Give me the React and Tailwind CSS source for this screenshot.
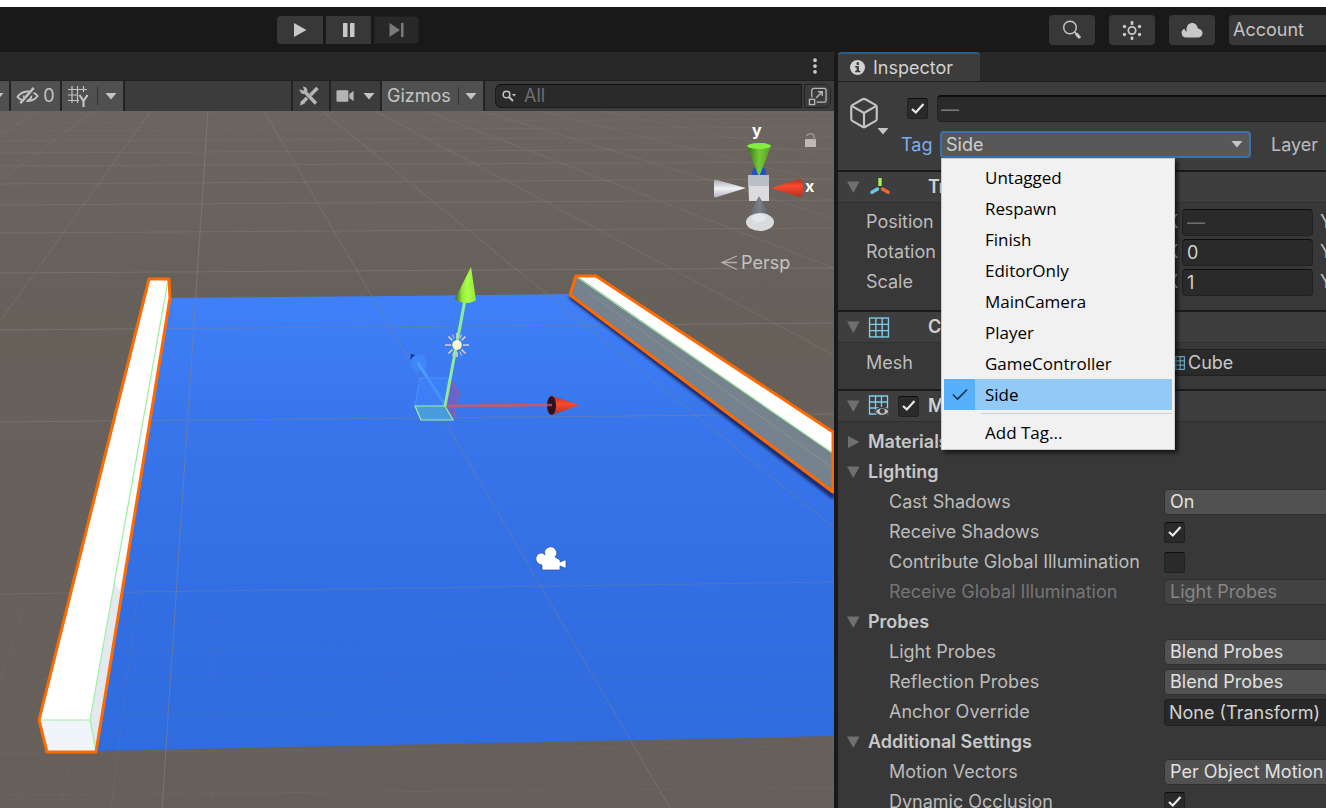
import { useState } from 'react'
import { MoreVertical, Box, Check } from 'lucide-react'

const TAGS = ['Untagged', 'Respawn', 'Finish', 'EditorOnly', 'MainCamera', 'Player', 'GameController', 'Side']

// ── Small shared pieces ──

function Caret({ className = '' }) {
    return (
        <svg viewBox="0 0 12 8" className={`w-3 h-2 shrink-0 fill-[#c4c4c4] ${className}`} aria-hidden="true">
            <path d="M0.5 1h11L6 7.5z" />
        </svg>
    )
}

function Fold({ open = true }) {
    return (
        <svg viewBox="0 0 14 14" className="w-[14px] h-[14px] shrink-0 fill-[#6f6f6f]" aria-hidden="true">
            {open ? <path d="M1 1.500h12.500L7.300 13z" /> : <path d="M2 1v12L13.500 7z" />}
        </svg>
    )
}

function CheckBox({ id, label, defaultChecked = false }) {
    return (
        <span className="grid w-[21px] h-[21px] shrink-0 place-items-center">
            <input
                id={id}
                type="checkbox"
                aria-label={label}
                defaultChecked={defaultChecked}
                className="peer col-start-1 row-start-1 w-full h-full appearance-none rounded-[3px] border border-[#212121] border-t-[#0d0d0d] bg-[#2a2a2a]"
            />
            <svg
                viewBox="0 0 14 12"
                className="pointer-events-none invisible peer-checked:visible col-start-1 row-start-1 w-[14px] h-3"
                fill="none"
                stroke="#e8e8e8"
                strokeWidth="2.200"
            >
                <path d="M1 6l3.800 3.500L12.500 1" />
            </svg>
        </span>
    )
}

function GridIcon({ className = '' }) {
    return (
        <svg viewBox="0 0 20 20" className={className} fill="none" stroke="#7fcdf0" strokeWidth="1.300" aria-hidden="true">
            <rect x="1" y="1" width="18" height="18" />
            <path d="M7 1v18M13 1v18M1 7h18M1 13h18" />
        </svg>
    )
}

// ── Top toolbar ──

function TopBar() {
    const side = 'flex items-center justify-center h-[30px] rounded bg-[#383838]'
    return (
        <header className="shrink-0 border-t-[7px] border-white bg-[#191919]">
            <div className="flex items-center h-[45px] pl-[277px]">
                <div className="flex gap-[3px]">
                    <button aria-label="Play" className="flex items-center justify-center w-[46px] h-7 rounded-l bg-[#383838]">
                        <svg viewBox="0 0 14 16" className="w-[14px] h-4 fill-[#c8c8c8]"><path d="M1 1l12.500 7L1 15z" /></svg>
                    </button>
                    <button aria-label="Pause" className="flex items-center justify-center w-[45px] h-7 bg-[#383838]">
                        <svg viewBox="0 0 14 16" className="w-[14px] h-4 fill-[#c8c8c8]">
                            <rect x="1" y="1" width="4.500" height="14" rx="0.500" />
                            <rect x="8" y="1" width="4.500" height="14" rx="0.500" />
                        </svg>
                    </button>
                    <button aria-label="Step" className="flex items-center justify-center w-[45px] h-7 rounded-r border border-[#202020] bg-[#282828]">
                        <svg viewBox="0 0 16 16" className="w-4 h-4 fill-[#7a7a7a]">
                            <path d="M0.500 1l10.500 7L0.500 15z" />
                            <rect x="12" y="1" width="2.500" height="14" />
                        </svg>
                    </button>
                </div>
                <div className="ml-auto flex gap-[14px]">
                    <button aria-label="Search" className={`${side} w-[46px]`}>
                        <svg viewBox="0 0 20 20" className="w-5 h-5" fill="none" stroke="#c8c8c8">
                            <circle cx="8" cy="7.500" r="6.300" strokeWidth="1.400" />
                            <path d="M12.500 12l2 2" strokeWidth="1.500" />
                            <path d="M14 13.500l4 4.500" strokeWidth="3" />
                        </svg>
                    </button>
                    <button aria-label="Services" className={`${side} w-[46px]`}>
                        <svg viewBox="0 0 20 20" className="w-5 h-5 fill-[#c8c8c8]">
                            <circle cx="10" cy="10.500" r="3.700" fill="none" stroke="#c8c8c8" strokeWidth="1.800" />
                            <rect x="8.600" y="1" width="2.800" height="4" rx="1" />
                            <rect x="8.600" y="16.500" width="2.800" height="3.500" rx="1" />
                            <circle cx="2.500" cy="6.500" r="1.700" />
                            <circle cx="17.500" cy="6.500" r="1.700" />
                            <circle cx="2.500" cy="14.500" r="1.700" />
                            <circle cx="17.500" cy="14.500" r="1.700" />
                        </svg>
                    </button>
                    <button aria-label="Cloud" className={`${side} w-[46px]`}>
                        <svg viewBox="0 0 22 16" className="w-[22px] h-4 fill-[#c8c8c8]">
                            <path d="M5 15.500a4.500 4.500 0 0 1-1.500-8.700c.3 1.400 1 2.300 2.200 2.900C4.800 5 7 1 11 1c3.500 0 5.500 2.500 5.800 5.500 2.700.2 4.700 2 4.700 4.500s-2 4.500-4.500 4.500z" />
                        </svg>
                    </button>
                    <button className="h-[30px] w-[97px] rounded-l bg-[#383838] pl-1 text-left text-[#c4c4c4]">Account</button>
                </div>
            </div>
        </header>
    )
}

// ── Scene panel ──

function SceneToolbar() {
    return (
        <div className="flex h-[31px] shrink-0 items-stretch gap-[2px] border-t border-[#202020] bg-[#242424]">
            <button aria-label="Audio options" className="flex w-[9px] items-center justify-start overflow-hidden bg-[#505050]">
                <Caret className="-ml-2" />
            </button>
            <button aria-label="Hidden objects" className="flex w-[49px] items-center justify-center gap-1 bg-[#505050] text-[#c4c4c4]">
                <svg viewBox="0 0 24 20" className="w-[23px] h-5" fill="none" stroke="#c4c4c4" strokeWidth="2">
                    <path d="M1.500 11C6 4 17 3 22.500 10 18 16.500 7 17 1.500 11z" />
                    <path d="M8 9.500c0 4 2 5 4 5s4-1.500 4-5" />
                    <path d="M4 19.500L20 1.500" stroke="#505050" strokeWidth="4.500" />
                    <path d="M4.500 17.500L18.500 1.500" strokeWidth="2.500" />
                </svg>
                0
            </button>
            <button aria-label="Grid snapping" className="flex w-[61px] items-center bg-[#505050] pl-[5px]">
                <svg viewBox="0 0 22 22" className="w-[22px] h-[22px]" fill="none" stroke="#c4c4c4" strokeWidth="1.200">
                    <path d="M5 1v17M10.500 1v17M16.500 1v6M1 4.500h19M1 10h10M1 15.500h11" />
                    <path d="M12.500 10l4 6 4-6M16.500 16v6" strokeWidth="2.200" />
                </svg>
                <span className="ml-2 h-[18px] w-px bg-[#333]" />
                <Caret className="ml-[7px]" />
            </button>
            <div className="w-[166px] shrink bg-[#3c3c3c]" />
            <button aria-label="Tools" className="flex w-9 items-center justify-center bg-[#3c3c3c] pr-1">
                <svg viewBox="0 0 20 20" className="w-5 h-5" fill="none" stroke="#b4b4b4" strokeWidth="3">
                    <path d="M6.500 6.500L17 17.500" strokeWidth="3.500" />
                    <path d="M1.500 4.500c1 3 4 3.500 5.500 1.800S7.500 2 5 1.500l1 2.500-2 1.500z" strokeWidth="1.500" fill="#b4b4b4" />
                    <path d="M18.500 2L11.500 9M8 12l-5 5" strokeWidth="3.500" />
                    <path d="M1 19.500l1-5L6 17.500z" fill="#b4b4b4" stroke="none" />
                </svg>
            </button>
            <button aria-label="Scene camera" className="flex w-[49px] items-center justify-center gap-2 bg-[#3c3c3c]">
                <svg viewBox="0 0 20 14" className="w-[19px] h-[14px] fill-[#b4b4b4]">
                    <rect x="0.500" y="1" width="12.500" height="12" rx="1" />
                    <path d="M14 5l4.500-3.500v11L14 9z" />
                </svg>
                <Caret />
            </button>
            <button className="flex w-[101px] items-center bg-[#505050] pl-[5px] text-[#c4c4c4]">
                Gizmos
                <span className="ml-auto h-[18px] w-px bg-[#333]" />
                <Caret className="mx-[6px]" />
            </button>
            <div className="flex min-w-0 flex-1 items-center gap-[2px] bg-[#3c3c3c] pl-[10px] pr-[3px]">
                <label className="flex h-6 min-w-0 flex-1 items-center rounded-l-md border border-[#1c1c1c] border-t-[#0d0d0d] bg-[#2a2a2a] pl-[6px]">
                    <svg viewBox="0 0 14 12" className="w-[14px] h-3" fill="none" stroke="#c4c4c4" strokeWidth="1.500">
                        <circle cx="4.500" cy="4.500" r="3.300" />
                        <path d="M7 7l4 4" strokeWidth="2" />
                        <path d="M10 4h4l-2 2.500z" fill="#c4c4c4" stroke="none" />
                    </svg>
                    <input aria-label="Search scene" placeholder="All" className="ml-2 min-w-0 flex-1 bg-transparent placeholder:text-[#6e6e6e] outline-none" />
                </label>
                <button aria-label="Open search window" className="flex h-6 w-[27px] items-center justify-center rounded-r-md border border-[#232323]">
                    <svg viewBox="0 0 20 20" className="w-[19px] h-[19px]" fill="none" stroke="#b8b8b8" strokeWidth="1.400">
                        <path d="M4 11V3.500A2 2 0 0 1 6 1.500h11a2 2 0 0 1 2 2V14a2 2 0 0 1-2 2H9" />
                        <rect x="1.500" y="13" width="5.500" height="5.500" />
                        <path d="M8.500 11.500l6-6M10.500 5h4.500v4.500" />
                    </svg>
                </button>
            </div>
        </div>
    )
}

const ROWS = [
    [115, 113, 0.12], [123, 119, 0.15], [131, 127, 0.2], [141, 137, 0.25], [153, 149, 0.3], [166, 162, 0.32],
    [184, 179, 0.36], [205, 200, 0.4], [233, 228, 0.42], [273, 268, 0.5], [330, 323, 0.5], [422, 414, 0.5], [594, 582, 0.35],
    [620, 616, 0.1], [650, 646, 0.1], [680, 675, 0.12], [715, 708, 0.12], [753, 746, 0.14], [795, 788, 0.16],
]

const COLUMNS = [
    [208, 111, 162, 808, 0.6], [264, 111, 670, 808, 0.45], [322, 111, 834, 528, 0.45], [375, 111, 834, 355, 0.4],
    [426, 111, 834, 268, 0.35], [482, 111, 834, 218, 0.3], [540, 111, 834, 184, 0.25], [600, 111, 834, 158, 0.2],
    [151, 111, 0, 321, 0.4], [94, 111, 0, 180, 0.3], [40, 111, 0, 135, 0.25],
    [26, 600, 0, 680, 0.15], [47, 750, 10, 808, 0.15], [73, 750, 60, 808, 0.15], [137, 600, 111, 808, 0.2], [213, 600, 213, 808, 0.12],
]

function SceneView() {
    return (
        <svg viewBox="0 111 834 697" preserveAspectRatio="xMidYMid slice" className="min-h-0 w-full flex-1" role="img" aria-label="Scene">
            <defs>
                <linearGradient id="sky" x1="0" y1="0" x2="0" y2="1">
                    <stop offset="0" stopColor="#6c655f" />
                    <stop offset="0.160" stopColor="#69625d" />
                    <stop offset="0.240" stopColor="#66615a" />
                    <stop offset="0.450" stopColor="#68605a" />
                    <stop offset="1" stopColor="#67605a" />
                </linearGradient>
                <linearGradient id="floor" x1="0" y1="0" x2="0" y2="1">
                    <stop offset="0" stopColor="#3f80f8" />
                    <stop offset="0.300" stopColor="#3875eb" />
                    <stop offset="0.700" stopColor="#316ee3" />
                    <stop offset="1" stopColor="#2f6cdf" />
                </linearGradient>
                <linearGradient id="green" x1="0" x2="1">
                    <stop offset="0" stopColor="#356e14" />
                    <stop offset="0.500" stopColor="#74ca35" />
                    <stop offset="1" stopColor="#5a9e29" />
                </linearGradient>
                <linearGradient id="lime" x1="0" x2="1">
                    <stop offset="0" stopColor="#3f6414" />
                    <stop offset="0.350" stopColor="#98e840" />
                    <stop offset="0.600" stopColor="#aaff48" />
                    <stop offset="1" stopColor="#94e43c" />
                </linearGradient>
                <linearGradient id="red" x1="0" y1="0" x2="0" y2="1">
                    <stop offset="0" stopColor="#b3301d" />
                    <stop offset="0.400" stopColor="#fb4a2e" />
                    <stop offset="1" stopColor="#b3301d" />
                </linearGradient>
                <linearGradient id="white" x1="0" y1="0" x2="0" y2="1">
                    <stop offset="0" stopColor="#a9abb2" />
                    <stop offset="0.500" stopColor="#f1f2f6" />
                    <stop offset="1" stopColor="#b4b6bc" />
                </linearGradient>
                <linearGradient id="gray" x1="0" x2="1">
                    <stop offset="0" stopColor="#5a5d64" />
                    <stop offset="0.500" stopColor="#7c8088" />
                    <stop offset="1" stopColor="#4d5056" />
                </linearGradient>
                <filter id="soft" x="-10%" y="-10%" width="120%" height="120%">
                    <feGaussianBlur stdDeviation="1.500" />
                </filter>
            </defs>

            <rect x="0" y="111" width="834" height="697" fill="url(#sky)" />
            <path d="M160 298l240-2 172-2 262 201v241L96 751z" fill="url(#floor)" />
            <g stroke="#84847f" strokeWidth="1">
                {ROWS.map(([a, b, o]) => <line key={a} x1="0" y1={a} x2="834" y2={b} strokeOpacity={o} />)}
                {COLUMNS.map(([a, b, c, d, o]) => <line key={`${a}-${b}`} x1={a} y1={b} x2={c} y2={d} strokeOpacity={o} />)}
            </g>

            {/* right wall */}
            <path d="M570 296L834 497" stroke="#14286a" strokeWidth="5" filter="url(#soft)" />
            <path d="M577 276h19L834 433v59L571 295z" fill="#77828f" />
            <path d="M577 276h19L834 433v21z" fill="#fff" />
            <path d="M577 277L834 454" stroke="#9fe9a0" strokeWidth="1.200" />
            <path d="M589 293L834 469" stroke="#84a08c" strokeWidth="0.600" />
            <path d="M576 276h20L833 432v60L570 295z" fill="none" stroke="#ff6a00" strokeWidth="3" strokeLinejoin="round" />

            {/* left wall */}
            <path d="M150 279h19l1 19L96 751H47l-7-31z" fill="#fff" />
            <path d="M168 280l2 18L96 751l-6-31z" fill="#e4e8f0" />
            <path d="M168 280l2 18L120 590l-9-10z" fill="#fbfcfe" />
            <path d="M40 720h50l6 31H47z" fill="#f0f5fb" />
            <path d="M168 280L90 720H40M90 720l6 31" fill="none" stroke="#9fef9f" strokeWidth="1.200" />
            <path d="M149 279h20l1 19L96 752H47l-8-32z" fill="none" stroke="#ff6a00" strokeWidth="3" strokeLinejoin="round" />

            {/* move handle */}
            <path d="M420 378h30l-5 28h-30z" fill="#3f86ff" fillOpacity="0.500" stroke="#4a92ff" />
            <path d="M450 379l9 13-6 28-8-14z" fill="#8657b8" fillOpacity="0.600" stroke="#b05890" />
            <path d="M415 406h30l8 14h-32z" fill="#4aa3d8" fillOpacity="0.850" stroke="#a0f0a0" strokeWidth="1.200" />
            <path d="M445 405L418 363" stroke="#4892ff" strokeWidth="3" />
            <path d="M410 364l1-10 8 2 3 4z" fill="#12308c" />
            <circle cx="418.500" cy="363" r="8.500" fill="#3f85fb" />
            <path d="M418 363l9 14" stroke="#4f9bff" strokeWidth="3" />
            <path d="M446 406l105-1" stroke="#bf5c70" strokeWidth="2.600" />
            <path d="M552 396l27 9-27 10z" fill="url(#red)" />
            <ellipse cx="551.500" cy="405.500" rx="4.500" ry="9.500" fill="#2c1220" />
            <path d="M547 405h5" stroke="#a04858" strokeWidth="2.500" />
            <path d="M445 406l20-106" stroke="#8fea9c" strokeWidth="3" />
            <path d="M471 267l5 33c-4 4-16 4-21-1z" fill="url(#lime)" />

            {/* light */}
            <g stroke="#d8d3c4" strokeWidth="1.600">
                <path d="M457 333v5M457 352v5M445 345h6M463 345h6M448.500 336.500l4 4M461.500 349.500l4 4M465.500 336.500l-4 4M452.500 349.500l-4 4" />
                <path d="M452.500 334.500l1.500 4M461.500 334.500l-1.500 4M452.500 355.500l1.500-4M461.500 355.500l-1.500-4" strokeWidth="1" />
            </g>
            <circle cx="457" cy="345" r="4.800" fill="#fcf7d2" />

            {/* camera */}
            <g fill="#fff" stroke="#2c4f9c" strokeWidth="0.700">
                <path d="M542 570v-5c-8-1-8-11-1-12 2 0 3 1 4 2a6 6 0 1 1 10 2l5 3v2l5-2h1v8h-1l-5-2v4z" />
            </g>

            {/* orientation gizmo */}
            <circle cx="759" cy="173" r="7" fill="#2050d0" />
            <path d="M747 146c4-4 20-4 24 0l-12 31z" fill="url(#green)" />
            <ellipse cx="759" cy="146" rx="12" ry="3" fill="#84ee3f" />
            <path d="M714 181c0-2 2-1 3-1l29 8-29 9c-1 0-3 1-3-1z" fill="url(#white)" />
            <path d="M748 175h21v26h-20z" fill="#dcdcde" />
            <path d="M748 175h21v11h-21z" fill="#babfc6" />
            <path d="M771 188l29-9c4 1 4 17 0 18z" fill="url(#red)" />
            <path d="M759 196l14 25h-27z" fill="url(#gray)" />
            <ellipse cx="760" cy="222" rx="14" ry="9" fill="#dadbde" />
            <ellipse cx="759" cy="218" rx="7" ry="4" fill="#e6e7ea" />
            <g fill="#fff" fontFamily="Inter, sans-serif" fontSize="16" fontWeight="700">
                <text x="752" y="136">y</text>
                <text x="805" y="192">x</text>
            </g>
            <rect x="805" y="139" width="11" height="8" rx="0.500" fill="#bdbab8" />
            <path d="M807 136c0-3 7-3 7 0v4" fill="none" stroke="#9a9693" strokeWidth="1.500" />
            <path d="M737 256l-15 6.500 15 7M737 262.500h-15" fill="none" stroke="#b5b1ae" strokeWidth="1.300" />
            <text x="741" y="269" fill="#c6c3c1" fontFamily="Inter, sans-serif" fontSize="18">Persp</text>
        </svg>
    )
}

function ScenePanel() {
    return (
        <section className="flex min-w-0 flex-1 flex-col bg-[#282828]">
            <div className="flex h-7 shrink-0 items-center justify-end pr-[9px]">
                <button aria-label="Panel menu"><MoreVertical className="h-5 w-5 text-[#d0d0d0]" strokeWidth={2.5} /></button>
            </div>
            <SceneToolbar />
            <SceneView />
        </section>
    )
}

// ── Inspector ──

function ComponentHeader({ icon, title, checkbox = false }) {
    return (
        <div className="flex h-[33px] shrink-0 items-center border-t-2 border-b border-t-[#1a1a1a] border-b-[#303030] bg-[#3e3e3e] pl-2">
            <Fold />
            <span className="ml-2 w-[22px]">{icon}</span>
            <span className="ml-2 mr-[9px] w-[21px]">
                {checkbox && <CheckBox label={`${title} enabled`} defaultChecked />}
            </span>
            <h2 className="font-semibold text-[#d2d2d2]">{title}</h2>
        </div>
    )
}

function Group({ title, open = true }) {
    return (
        <button className="flex h-[30px] w-full items-center gap-2 pl-2 font-semibold text-[#c8c8c8]">
            <Fold open={open} />
            {title}
        </button>
    )
}

function Row({ id, label, disabled = false, children }) {
    return (
        <div className="flex h-[30px] items-center">
            <label htmlFor={id} className={`w-[326px] shrink-0 pl-[51px] ${disabled ? 'text-[#757575]' : 'text-[#bcbcbc]'}`}>{label}</label>
            {children}
        </div>
    )
}

function SelectRow({ id, label, value, disabled }) {
    return (
        <Row id={id} label={label} disabled={disabled}>
            <select
                id={id}
                disabled={disabled}
                defaultValue={value}
                className="h-[26px] min-w-0 flex-1 appearance-none rounded-l border border-r-0 border-[#303030] bg-[#515151] pl-[5px] text-[#e0e0e0] disabled:bg-[#434343] disabled:text-[#858585] disabled:opacity-100"
            >
                <option>{value}</option>
            </select>
        </Row>
    )
}

function VectorRow({ label, value }) {
    return (
        <div className="flex h-[30px] items-center whitespace-nowrap text-[#bcbcbc]">
            <span className="w-[300px] shrink-0">{label}</span>
            <label className="flex items-center">
                <span className="w-4">X</span>
                <input
                    defaultValue={value}
                    className={`h-[27px] w-[131px] rounded border border-[#212121] border-t-[#0d0d0d] bg-[#2a2a2a] pl-1 ${value === '—' ? 'text-[#6e6e6e]' : 'text-[#d2d2d2]'}`}
                />
            </label>
            <span className="ml-[7px]">Y</span>
        </div>
    )
}

function TagMenu({ value, onPick }) {
    return (
        <div
            role="listbox"
            aria-label="Tags"
            className="absolute left-px top-full z-10 w-[234px] border border-[#cccccc] bg-[#f1f1f1] px-[2px] pt-[3px] font-['Open_Sans',sans-serif] text-[17px] text-black shadow-[3px_3px_4px_rgba(0,0,0,0.6)]"
        >
            {TAGS.map(tag => (
                <button
                    key={tag}
                    role="option"
                    aria-selected={tag === value}
                    onClick={() => onPick(tag)}
                    className={`flex h-[31px] w-full items-center ${tag === value ? 'bg-[#91c9f7]' : 'hover:bg-[#e0e0e0]'}`}
                >
                    <span className={`mr-[10px] flex h-full w-[31px] items-center justify-center ${tag === value ? 'bg-[#56b0fa]' : ''}`}>
                        {tag === value && <Check className="h-5 w-5 text-[#1b3550]" strokeWidth={2} />}
                    </span>
                    {tag}
                </button>
            ))}
            <hr className="my-[3px] ml-[37px] border-[#d0d0d0]" />
            <button className="flex h-8 w-full items-center pl-[41px]">Add Tag...</button>
        </div>
    )
}

function ObjectHeader() {
    const [tag, setTag] = useState('Side')
    return (
        <div className="flex h-[88px] shrink-0 pt-[13px] bg-[#3c3c3c]">
            <button aria-label="Object icon" className="flex w-[60px] shrink-0 items-start pl-[9px]">
                <Box className="h-9 w-[34px] shrink-0 text-[#c4c4c4]" strokeWidth={1.5} />
                <Caret className="-ml-1 mt-8" />
            </button>
            <div className="flex flex-1 flex-col gap-[9px]">
                <div className="flex h-[27px] items-center gap-[9px] pl-[9px]">
                    <CheckBox label="Active" defaultChecked />
                    <input
                        aria-label="Name"
                        defaultValue="—"
                        className="h-[27px] min-w-0 flex-1 rounded-l border border-r-0 border-[#212121] border-t-2 border-t-[#0d0d0d] bg-[#2a2a2a] pl-[3px] text-[#7a7a7a]"
                    />
                </div>
                <div className="flex h-[27px] items-center">
                    <label htmlFor="tag" className="w-[42px] shrink-0 pl-[3px] text-[#7eacf1]">Tag</label>
                    <div className="relative w-[311px] shrink-0">
                        <select
                            id="tag"
                            value={tag}
                            onChange={e => setTag(e.target.value)}
                            className="block h-[27px] w-full appearance-none rounded border-2 border-[#3a72b0] bg-[#585858] pl-1 text-[#cfcfcf]"
                        >
                            {TAGS.map(t => <option key={t}>{t}</option>)}
                        </select>
                        <Caret className="pointer-events-none absolute right-2 top-[9px]" />
                        <TagMenu value={tag} onPick={setTag} />
                    </div>
                    <span className="ml-5 text-[#bcbcbc]">Layer</span>
                </div>
            </div>
        </div>
    )
}

function Inspector() {
    return (
        <aside className="flex w-[492px] shrink-0 flex-col overflow-hidden border-l-4 border-[#191919] bg-[#383838]">
            <div className="flex h-[30px] shrink-0 border-b border-[#202020] bg-[#282828]">
                <button className="flex w-[142px] items-center gap-2 rounded-t border-t-2 border-[#2c5d87] bg-[#3c3c3c] pl-3 text-[#d2d2d2]">
                    <svg viewBox="0 0 16 16" className="h-[15px] w-[15px]">
                        <circle cx="8" cy="8" r="8" fill="#d2d2d2" />
                        <path d="M5.500 6.500H9.500v5H11v1.500H5.500v-1.500H7V8H5.500zM7 2.500h2.500v2.800H7z" fill="#3c3c3c" />
                    </svg>
                    Inspector
                </button>
            </div>
            <ObjectHeader />

            <ComponentHeader
                title="Transform"
                icon={
                    <svg viewBox="0 0 22 20" className="w-[22px] h-5" strokeWidth="3.400" strokeLinecap="butt">
                        <path d="M12 1v8" stroke="#a4ef52" />
                        <path d="M9.500 12l-5.500 3.300" stroke="#6ec6f0" strokeLinecap="round" />
                        <path d="M14.500 12l5.500 3.300" stroke="#f0663c" strokeLinecap="round" />
                    </svg>
                }
            />
            <div className="shrink-0 pb-[13px] pl-7 pt-1">
                <VectorRow label="Position" value="—" />
                <VectorRow label="Rotation" value="0" />
                <VectorRow label="Scale" value="1" />
            </div>

            <ComponentHeader title="Cube (Mesh Filter)" icon={<GridIcon className="h-[21px] w-[22px]" />} />
            <div className="flex h-[46px] shrink-0 items-start pl-7 pt-[6px]">
                <label htmlFor="mesh" className="w-[298px] shrink-0 leading-[27px] text-[#bcbcbc]">Mesh</label>
                <button id="mesh" className="flex h-[27px] flex-1 items-center gap-[3px] border-y border-[#202020] bg-[#2a2a2a] pl-[7px] text-[#c8c8c8]">
                    <GridIcon className="h-4 w-[14px]" />
                    Cube
                </button>
            </div>

            <ComponentHeader
                title="Mesh Renderer"
                checkbox
                icon={
                    <svg viewBox="0 0 22 22" className="h-[22px] w-[22px]" fill="none">
                        <path d="M1.500 1h18v18h-18zM7.500 1v18M13.500 1v18M1.500 7h18M1.500 13h18" stroke="#7fcdf0" strokeWidth="1.300" />
                        <path d="M7 16.500c3-5.500 11-5.500 14.500 0-3.500 5.500-11.500 5.500-14.500 0z" fill="#c4c4c4" stroke="#3e3e3e" strokeWidth="1.500" />
                        <circle cx="14.300" cy="16" r="2.600" fill="#3e3e3e" />
                    </svg>
                }
            />
            <div className="shrink-0 pt-[5px]">
                <Group title="Materials" open={false} />
                <Group title="Lighting" />
                <SelectRow id="cast" label="Cast Shadows" value="On" />
                <Row id="receive" label="Receive Shadows"><CheckBox id="receive" defaultChecked /></Row>
                <Row id="contribute" label="Contribute Global Illumination"><CheckBox id="contribute" /></Row>
                <SelectRow id="gi" label="Receive Global Illumination" value="Light Probes" disabled />
                <Group title="Probes" />
                <SelectRow id="light" label="Light Probes" value="Blend Probes" />
                <SelectRow id="reflection" label="Reflection Probes" value="Blend Probes" />
                <Row id="anchor" label="Anchor Override">
                    <input
                        id="anchor"
                        defaultValue="None (Transform)"
                        className="h-[27px] min-w-0 flex-1 rounded-l border border-r-0 border-[#202020] bg-[#282828] pl-1 text-[#d2d2d2]"
                    />
                </Row>
                <Group title="Additional Settings" />
                <SelectRow id="motion" label="Motion Vectors" value="Per Object Motion" />
                <Row id="occlusion" label="Dynamic Occlusion"><CheckBox id="occlusion" defaultChecked /></Row>
            </div>
        </aside>
    )
}

export default function App() {
    return (
        <div className="flex h-screen flex-col overflow-hidden bg-[#191919] font-['Inter',sans-serif] text-[18px] leading-6">
            <TopBar />
            <main className="flex min-h-0 flex-1">
                <ScenePanel />
                <Inspector />
            </main>
        </div>
    )
}
